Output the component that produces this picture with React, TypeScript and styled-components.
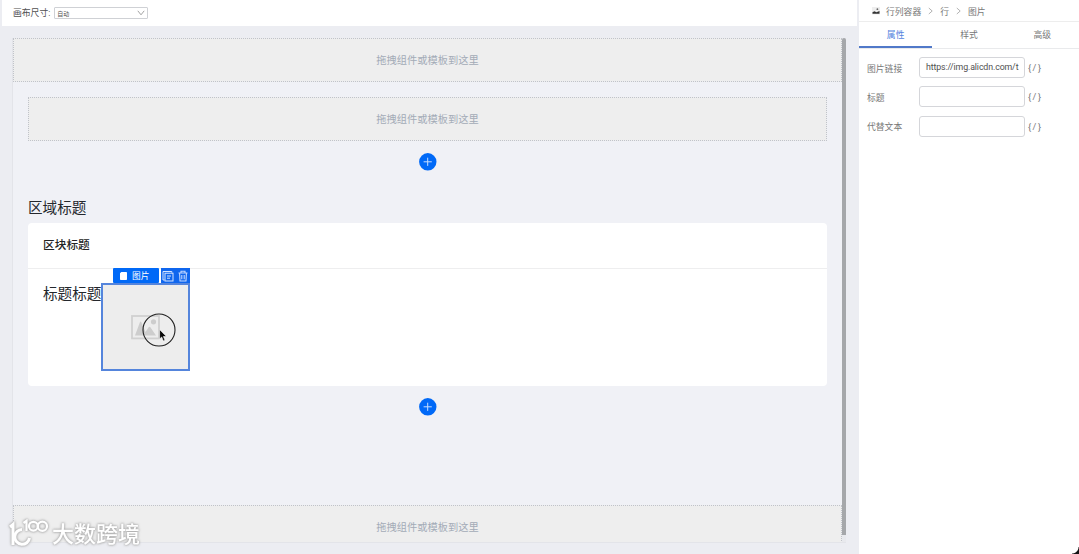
import React, { useState } from "react";
import styled, { createGlobalStyle } from "styled-components";

type FieldProps = {
  label: string;
  value?: string;
};

const TABS = ["属性", "样式", "高级"];
const CRUMBS = ["行列容器", "行", "图片"];

const DropHint = "拖拽组件或模板到这里";

const AddButton = () => (
  <AddCircle>
    <svg width="18" height="18" viewBox="0 0 18 18" stroke="#c4dcff" strokeWidth="1">
      <circle cx="8.8" cy="8.8" r="8.7" fill="#0069f7" stroke="none" />
      <path d="M8.7 4.7V12.9M4.6 8.8H12.8" />
    </svg>
  </AddCircle>
);

const Field = ({ label, value = "" }: FieldProps) => (
  <FieldRow>
    <FieldLabel>{label}</FieldLabel>
    <FieldInput>
      <FieldValue>{value}</FieldValue>
    </FieldInput>
    <Binding>{"{/}"}</Binding>
  </FieldRow>
);

const SelectedImage = () => (
  <ImageBox>
    <svg width="29" height="25" viewBox="0 0 29 25">
      <rect x="1" y="1" width="27" height="22.4" fill="none" stroke="#d0d0d0" strokeWidth="1.8" />
      <circle cx="22.5" cy="6.8" r="2.6" fill="#cdcdcd" />
      <path d="M4 20.5L9 7Q9.6 6 10.2 7L14.5 17L17.8 12Q18.5 11.3 19.2 12L25 20.5Z" fill="#cdcdcd" />
    </svg>
    <ImageActions>
      <ActionLabel>
        <svg width="9" height="10" viewBox="0 0 9 10" fill="#fff">
          <path d="M2.3 1H7.2Q8 1 8 1.8V8.2Q8 9 7.2 9H1.8Q1 9 1 8.2V2.3Z" />
        </svg>
        图片
      </ActionLabel>
      <ActionIcons>
        <svg width="12" height="12" viewBox="0 0 12 12" fill="none" stroke="#d5e4ff" strokeWidth="1">
          <path d="M2.6 10H1V1.5H9.8V2.6" />
          <rect x="3" y="3.2" width="8" height="7.8" />
          <path d="M5 6H9M5 8.2H8" />
        </svg>
        <svg width="10" height="12" viewBox="0 0 10 12" fill="none" stroke="#c3d8ff" strokeWidth="1.1">
          <path d="M0.5 3H9.5M3 3V1.2H7V3M1.6 3.5L2 11H8L8.4 3.5M3.8 5V9.3M6.2 5V9.3" />
        </svg>
      </ActionIcons>
    </ImageActions>
    <Pointer width="34" height="34" viewBox="0 0 34 34">
      <circle cx="17" cy="17" r="16" fill="none" stroke="#202020" strokeWidth="1.1" />
      <path
        d="M17.6 16.6V26L19.7 24L21.3 27.9L23 27.2L21.4 23.5H24.4Z"
        fill="#080808"
        stroke="#fff"
        strokeWidth="0.6"
      />
    </Pointer>
  </ImageBox>
);

const App = () => {
  const [activeTab, setActiveTab] = useState<string>("属性");

  return (
    <Page>
      <GlobalStyle />
      <Workspace>
        <Toolbar>
          <span>画布尺寸:</span>
          <SizeSelect>
            自动
            <svg width="8" height="6" viewBox="0 0 8 6" fill="none" stroke="#999" strokeWidth="0.9">
              <path d="M0.8 0.8L4 4.8L7.2 0.8" />
            </svg>
          </SizeSelect>
        </Toolbar>
        <Canvas>
          <CanvasContent>
            <DropZone>{DropHint}</DropZone>
            <Section>
              <DropZone>{DropHint}</DropZone>
              <AddButton />
              <SectionTitle>区域标题</SectionTitle>
              <Block>
                <BlockHeader>区块标题</BlockHeader>
                <BlockBody>
                  <BlockText>标题标题</BlockText>
                  <SelectedImage />
                </BlockBody>
              </Block>
              <AddButton />
            </Section>
            <DropZone>{DropHint}</DropZone>
          </CanvasContent>
          <ScrollTrack>
            <ScrollThumb />
          </ScrollTrack>
        </Canvas>
      </Workspace>

      <Panel>
        <Breadcrumb>
          <svg width="8" height="8" viewBox="0 0 8 8">
            <rect width="8" height="7.5" fill="#eeeeee" />
            <path d="M0.5 6.8V5.3L2.5 4.2L4.4 5.3L7.5 3.9V6.8Z" fill="#333" />
            <circle cx="5.4" cy="2.2" r="0.9" fill="#666" />
          </svg>
          {CRUMBS.map((crumb, index) => (
            <React.Fragment key={crumb}>
              {index > 0 && (
                <svg width="5" height="8" viewBox="0 0 5 8" fill="none" stroke="#aaa" strokeWidth="0.9">
                  <path d="M0.8 1L4.2 4L0.8 7" />
                </svg>
              )}
              <span>{crumb}</span>
            </React.Fragment>
          ))}
        </Breadcrumb>
        <Tabs>
          {TABS.map((tab) => (
            <Tab key={tab} $active={tab === activeTab} onClick={() => setActiveTab(tab)}>
              {tab}
            </Tab>
          ))}
        </Tabs>
        <Fields>
          <Field label="图片链接" value="https://img.alicdn.com/t" />
          <Field label="标题" />
          <Field label="代替文本" />
        </Fields>
      </Panel>

      <Watermark>
        <svg width="40" height="30" viewBox="0 0 40 30" fill="none" stroke="#fff" strokeWidth="3">
          <path d="M1 8L4 5.5V26" />
          <path d="M13 10.5A7.4 7.4 0 1 0 20.5 19" />
          <path d="M14.5 4L17.5 1.8V12" strokeWidth="2.2" />
          <circle cx="24.4" cy="7.2" r="4.4" strokeWidth="2.2" />
          <circle cx="33.4" cy="7.2" r="4.6" strokeWidth="2.2" />
        </svg>
        大数跨境
      </Watermark>
      <Corner />
    </Page>
  );
};

const GlobalStyle = createGlobalStyle`
  * {
    box-sizing: border-box;
  }

  body {
    margin: 0;
    overflow: hidden;
    font-family: Roboto, "Noto Sans CJK SC", sans-serif;
  }

  svg {
    flex-shrink: 0;
  }
`;

const Page = styled.div`
  position: relative;
  display: flex;
  justify-content: space-between;
  height: 554px;
  background: #ecedf2;
`;

const Workspace = styled.div`
  display: flex;
  flex-direction: column;
  width: 857px;
`;

const Toolbar = styled.div`
  display: flex;
  align-items: center;
  gap: 4px;
  height: 26px;
  margin-left: 2px;
  padding-left: 11px;
  background: #fff;
  color: #505050;
  font-size: 8.8px;

  > span {
    padding-bottom: 2px;
  }
`;

const SizeSelect = styled.div`
  display: flex;
  align-items: center;
  justify-content: space-between;
  width: 94px;
  height: 12px;
  padding: 0 2px;
  border: 1px solid #cfd1d5;
  border-radius: 1px;
  color: #555;
  font-size: 6px;
`;

const Canvas = styled.div`
  display: flex;
  width: 834px;
  height: 505px;
  margin: 12px 0 0 12px;
  border-left: 1px solid #e3e4e9;
  border-bottom: 1px solid #e3e4e9;
  background: #f0f1f6;
  overflow: hidden;
`;

const CanvasContent = styled.div`
  width: 829px;
`;

const Section = styled.div`
  height: 423px;
  padding: 15px 15px 0;
`;

const DropZone = styled.div`
  display: flex;
  align-items: center;
  justify-content: center;
  height: 44px;
  padding-bottom: 2px;
  border: 1px dotted #c0c3ca;
  background: #eeeeee;
  color: #a3abb7;
  font-size: 10.25px;
`;

const AddCircle = styled.div`
  display: flex;
  width: 18px;
  height: 18px;
  margin: 12px auto 0;
`;

const SectionTitle = styled.div`
  margin-top: 26px;
  height: 26px;
  color: #24272c;
  font-size: 14.6px;
  line-height: 22px;
`;

const Block = styled.div`
  height: 163px;
  border-radius: 4px;
  background: #fff;
`;

const BlockHeader = styled.div`
  height: 46px;
  padding-left: 15px;
  border-bottom: 1px solid #eeeeef;
  color: #222;
  font-size: 11.7px;
  font-weight: 500;
  line-height: 44px;
`;

const BlockBody = styled.div`
  display: flex;
  padding: 14px 0 0 15px;
`;

const BlockText = styled.div`
  width: 58px;
  color: #24272c;
  font-size: 14.6px;
  line-height: 22px;
  white-space: nowrap;
`;

const ImageBox = styled.div`
  position: relative;
  display: flex;
  align-items: center;
  justify-content: center;
  width: 89px;
  height: 88px;
  border: 2px solid #5585dc;
  background: #ededed;
`;

const ImageActions = styled.div`
  position: absolute;
  right: -2px;
  top: -17px;
  display: flex;
  gap: 2px;
  height: 15px;
  color: #fff;
`;

const ActionLabel = styled.div`
  display: flex;
  align-items: center;
  gap: 4px;
  width: 46px;
  padding-left: 6px;
  border-radius: 1px;
  background: #0069f7;
  font-size: 8.7px;
`;

const ActionIcons = styled.div`
  display: flex;
  align-items: center;
  justify-content: space-between;
  width: 29px;
  padding: 0 2px 0 1px;
  background: #0f66ee;
`;

const Pointer = styled.svg`
  position: absolute;
  left: 39px;
  top: 28px;
`;

const ScrollTrack = styled.div`
  width: 4px;
  background: #e8e9ed;
`;

const ScrollThumb = styled.div`
  height: 497px;
  border-radius: 2px 2px 0 0;
  background: #a5a7aa;
`;

const Panel = styled.div`
  width: 220px;
  background: #fff;
  color: #777;
`;

const Breadcrumb = styled.div`
  display: flex;
  align-items: center;
  gap: 7px;
  height: 22px;
  padding: 1px 0 0 13px;
  border-bottom: 1px solid #ededed;
  font-size: 8.8px;

  span {
    margin-left: -1px;
  }

  span + svg + span {
    margin-left: 0;
  }
`;

const Tabs = styled.div`
  display: flex;
  height: 27px;
  border-bottom: 1px solid #e9eaec;
`;

const Tab = styled.div<{ $active: boolean }>`
  flex: 1;
  height: 26px;
  border-bottom: 2px solid ${({ $active }) => ($active ? "#5179c9" : "transparent")};
  color: ${({ $active }) => ($active ? "#5584de" : "#777")};
  font-size: 8.8px;
  line-height: 26px;
  text-align: center;
`;

const Fields = styled.div`
  display: grid;
  gap: 8.4px;
  padding: 8px 8px 0;
`;

const FieldRow = styled.div`
  display: flex;
  align-items: center;
  height: 21px;
`;

const FieldLabel = styled.div`
  width: 52px;
  font-size: 8.8px;
  padding-top: 1px;
`;

const FieldInput = styled.div`
  width: 106px;
  height: 21px;
  padding: 0 6px;
  border: 1px solid #d5d6da;
  border-radius: 3px;
`;

const FieldValue = styled.div`
  color: #505050;
  font-size: 8.8px;
  letter-spacing: -0.12px;
  line-height: 19px;
  white-space: nowrap;
`;

const Binding = styled.span`
  margin-left: 3px;
  font-size: 9.2px;
  letter-spacing: 1.5px;
`;

const Watermark = styled.div`
  position: absolute;
  left: 9px;
  top: 519px;
  display: flex;
  gap: 3px;
  color: #fff;
  font-size: 22px;
  font-weight: 500;
  line-height: 32px;
  filter: drop-shadow(0 0 1px #aaa) drop-shadow(0 0 1px #bbb);
`;

const Corner = styled.div`
  position: absolute;
  right: 0;
  bottom: 0;
  width: 7px;
  height: 7px;
  background: radial-gradient(circle at 0 0, transparent 6px, #151515 7px);
`;

export default App;
